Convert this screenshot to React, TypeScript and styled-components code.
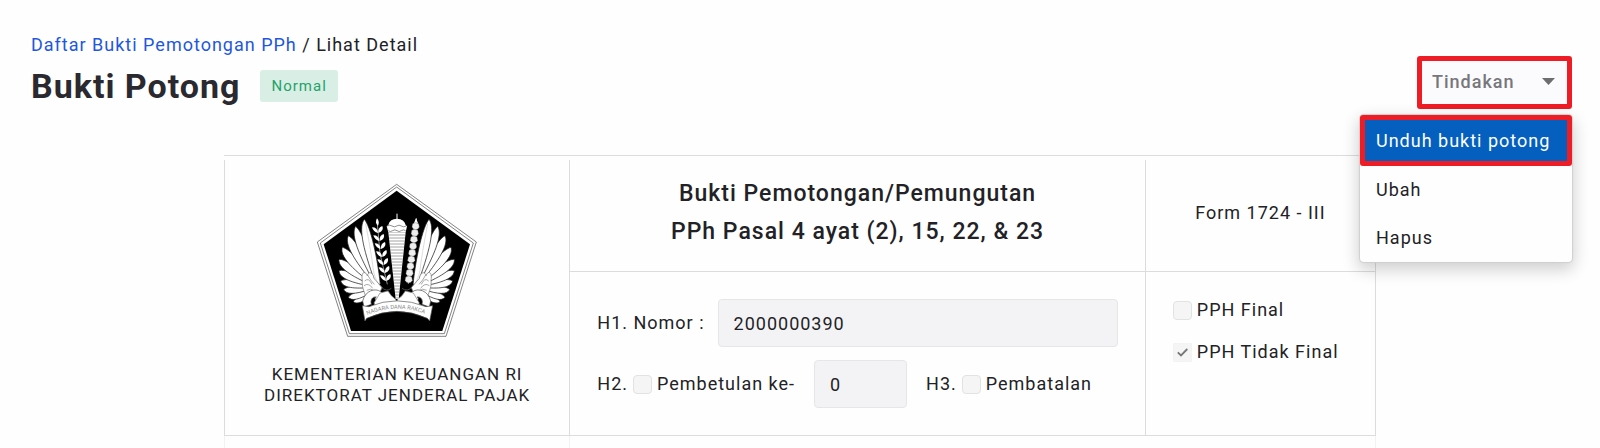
import React from "react";
import styled, { createGlobalStyle, css } from "styled-components";

const GlobalStyle = createGlobalStyle`
  * { box-sizing: border-box; }
  body {
    margin: 0;
    background: #fefefe;
    color: #222226;
    font-family: Roboto, "Liberation Sans", sans-serif;
    font-size: 18px;
    line-height: 24px;
    letter-spacing: 1px;
  }
  button, input { font: inherit; letter-spacing: inherit; color: inherit; }
`;

const line = "#dcdcdc";
const accent = "#ee1c25";

const Page = styled.main`
  padding-top: 32px;
`;

const Header = styled.header`
  padding: 0 28px 0 31px;
`;

const Breadcrumb = styled.nav`
  padding-top: 1px;
  line-height: 23px;
  a { color: #1f57e0; text-decoration: none; }
`;

const TitleRow = styled.div`
  display: flex;
  align-items: center;
  justify-content: space-between;
`;

const TitleGroup = styled.div`
  display: flex;
  align-items: center;
  gap: 20px;
  padding-top: 6px;
`;

const Title = styled.h1`
  margin: 0;
  font-size: 34px;
  line-height: 40px;
  font-weight: 700;
  color: #2b2930;
`;

const Badge = styled.span`
  padding: 4px 11px;
  border-radius: 3px;
  background: #d9efe5;
  color: #1fa36c;
  font-size: 15px;
`;

const Dropdown = styled.div`
  position: relative;
`;

const DropdownButton = styled.button`
  display: flex;
  align-items: center;
  justify-content: space-between;
  width: 155px;
  height: 53px;
  padding: 0 12px 2px 10px;
  border: 5px solid ${accent};
  border-radius: 3px;
  background: #fbfbfd;
  color: #77777b;
  font-weight: 500;
`;

const Menu = styled.div`
  position: absolute;
  top: 100%;
  right: 0;
  z-index: 1;
  width: 212px;
  margin-top: 6px;
  border-radius: 4px;
  background: #fefefe;
  box-shadow: 0 0 1px 1px #cfcfcf, 0 6px 16px 2px rgba(0, 0, 0, 0.18);
`;

const MenuItem = styled.button<{ $active?: boolean }>`
  display: block;
  width: 100%;
  height: 48px;
  padding: 0 16px;
  border: 0;
  background: none;
  text-align: left;
  ${({ $active }) =>
    $active &&
    css`
      height: 51px;
      padding: 0 11px;
      border: 5px solid ${accent};
      border-radius: 3px;
      background: #045fbf;
      color: #fff;
    `}
`;

const Sheet = styled.section`
  width: 72%;
  margin: 46px auto 0;
  padding-top: 4px;
  border-top: 1px solid ${line};
`;

const Grid = styled.div`
  display: grid;
  grid-template-columns: 3fr 5fr 2fr;
  border-right: 1px solid ${line};
`;

const Cell = styled.div`
  border-left: 1px solid ${line};
  border-bottom: 1px solid ${line};
`;

const Agency = styled(Cell)`
  grid-row: span 2;
  display: flex;
  flex-direction: column;
  align-items: center;
  gap: 26px;
  padding-top: 23px;
  font-size: 17px;
  line-height: 21px;
  text-align: center;
  p { margin: 0; }
`;

const CenterCell = styled(Cell)`
  display: grid;
  place-items: center;
  padding: 15px 0 20px;
  text-align: center;
`;

const FormTitle = styled.h2`
  margin: 0;
  font-size: 23px;
  line-height: 38px;
  font-weight: 500;
`;

const Fields = styled(Cell)`
  display: flex;
  flex-direction: column;
  gap: 13px;
  padding: 27px 27px 27px;
`;

const FieldRow = styled.div`
  display: flex;
  align-items: center;
`;

const TextInput = styled.input<{ $short?: boolean }>`
  height: 48px;
  padding: 0 15px;
  border: 1px solid #e6e6e9;
  border-radius: 4px;
  background: #f3f3f5;
  ${({ $short }) =>
    $short
      ? css`width: 93px; margin: 0 19px;`
      : css`flex: 1; min-width: 0; margin-left: 13px;`}
`;

const Options = styled(Cell)`
  display: flex;
  flex-direction: column;
  gap: 18px;
  padding: 26px 0 0 27px;
`;

const CheckLabel = styled.label`
  display: flex;
  align-items: center;
  gap: 5px;
`;

const CheckStack = styled.span`
  display: grid;
  place-items: center;
  > * { grid-area: 1 / 1; }
  svg { pointer-events: none; }
`;

const CheckInput = styled.input`
  appearance: none;
  width: 19px;
  height: 19px;
  margin: 0;
  border: 1px solid #e2e2e2;
  border-radius: 4px;
  background: #f5f5f5;
  &:checked { border-color: #f3f3f3; border-radius: 1px; }
`;

const FieldPrefix = styled.span`
  margin-right: 5px;
`;

const Tail = styled.div`
  display: grid;
  grid-template-columns: 3fr 7fr;
  height: 12px;
  border-right: 1px solid #f2f2f2;
  > * { border-left: 1px solid #f2f2f2; }
`;

function Check({ label, checked = false }: { label: string; checked?: boolean }) {
  return (
    <CheckLabel>
      <CheckStack>
        <CheckInput type="checkbox" defaultChecked={checked} />
        {checked && (
          <svg width="11" height="9" viewBox="0 0 11 9" fill="none" stroke="#77777a" strokeWidth="1.8">
            <path d="M.8 4.4 4 7.5 10.3 1" />
          </svg>
        )}
      </CheckStack>
      {label}
    </CheckLabel>
  );
}

const feathers: [number, number, number, number, number][] = [
  // tip x, tip y, root x, root y, half width
  [160, 394, 222, 366, 12],
  [145, 381, 218, 358, 14],
  [131, 358, 216, 350, 15],
  [122, 332, 214, 346, 16],
  [117, 301, 214, 342, 17],
  [117, 267, 216, 338, 18],
  [127, 231, 218, 334, 19],
  [145, 196, 222, 332, 19],
  [167, 168, 228, 334, 19],
  [193, 147, 236, 346, 20],
];

function feather([tx, ty, rx, ry, w]: [number, number, number, number, number]) {
  const dx = rx - tx;
  const dy = ry - ty;
  const len = Math.hypot(dx, dy);
  const nx = (-dy / len) * w;
  const ny = (dx / len) * w;
  const at = (t: number, s: number) => `${tx + dx * t + nx * s} ${ty + dy * t + ny * s}`;
  return `M${tx} ${ty}C${at(0.08, 1)} ${at(0.35, 1.25)} ${at(0.95, 0.4)}L${rx} ${ry}L${at(0.97, -0.3)}C${at(0.6, -0.7)} ${at(0.12, -0.7)} ${tx} ${ty}Z`;
}

function Wing() {
  return (
    <g fill="#fff" stroke="#1c1c1c" strokeWidth="2.2">
      {feathers.map((f) => (
        <path key={f[1]} d={feather(f)} />
      ))}
      <path d="M197 160Q216 260 220 300Q226 334 246 352" fill="none" stroke="#ccc" strokeWidth="2" />
      <path d="M187 330C182 304 196 300 202 316C206 300 220 308 222 324L246 352L238 370L200 384C190 360 185 346 187 330Z" stroke="#777" />
      <path d="M194 332q12-12 22 10M192 346q14-10 26 8M203 314q8 16 20 28M200 360q12-8 24 2" fill="none" stroke="#888" />
      <path d="M188 392C196 360 226 352 242 364C256 374 248 392 234 392C226 392 222 384 229 380C218 378 210 388 214 402L192 410Z" stroke="#555" />
      <path d="M240 368l24-6 10 14 14 12v12l-60 8-6-10z" stroke="#888" />
      <path d="M244 350q14 16 30 4" fill="none" stroke="#666" />
    </g>
  );
}

function Emblem() {
  const leaves = [0, 1, 2, 3, 4, 5, 6];
  const stripes = Array.from({ length: 22 }, (_, i) => i);
  return (
    <svg width="162" height="155" viewBox="48 38 486 465" role="img" aria-label="Kementerian Keuangan">
      <g fill="#fff" stroke="#444" strokeWidth="2">
        <path d="M290 42 529 215 438 498H143L52 215Z" />
        <path d="M290 50 520 218 433 490H148L61 218Z" />
      </g>
      <path d="M290 61 510 222 427 482H153L71 222Z" fill="#000" />
      <Wing />
      <g transform="translate(580 0) scale(-1 1)">
        <Wing />
      </g>
      <path d="M232 160 240 250 262 342" fill="none" stroke="#ddd" strokeWidth="2" />
      <path d="M231 144q9 10 3 22q-11-8-3-22z" fill="#fff" />
      {leaves.map((i) => (
        <g key={i} transform={`translate(${234 + i * 4} ${184 + i * 24})`} fill="#fff">
          <path d="M0 4Q-14 1-18-13Q-1-13 0 4Z" />
          <path d="M1 4Q-1-12 13-17Q19-3 1 4Z" />
        </g>
      ))}
      <path d="M349 144 325 340" stroke="#ddd" strokeWidth="3" />
      <path d="M348 144l6 14h-12z" fill="#fff" />
      {Array.from({ length: 9 }, (_, i) => (
        <path
          key={i}
          transform={`translate(${347 - i * 2.6} ${168 + i * 20})`}
          d="M-9-8Q0-14 9-8L11 2Q8 10 0 10Q-8 10-11 2Z"
          fill="#eee"
          stroke="#555"
        />
      ))}
      <path d="M291 130v18" stroke="#fff" strokeWidth="3" />
      <path d="M265 164Q268 146 291 145Q313 146 317 164L321 168L317 186H265L260 168Z" fill="#fff" />
      <path d="M262 167q7-5 14 0t14 0t14 0t14 0M265 181q6 5 13 0t13 0t13 0t13 0" fill="none" stroke="#555" strokeWidth="2" />
      <path d="M265 186H317L296 386H287Z" fill="#fff" />
      {stripes.map((i) => {
        const y = 194 + i * 9;
        const half = 26 - ((y - 186) / 200) * 22;
        return <path key={i} d={`M${291 - half} ${y}H${291 + half}`} stroke="#777" strokeWidth="2" />;
      })}
      <path d="M187 406L207 409Q290 374 378 409L398 406L389 452L382 444Q290 402 200 444L195 452Z" fill="#fff" stroke="#555" strokeWidth="2" />
      <path id="motto" d="M202 434Q290 396 384 434" fill="none" />
      <text fontSize="17" fill="#888" letterSpacing="0">
        <textPath href="#motto">NAGARA DANA RAKCA</textPath>
      </text>
    </svg>
  );
}

export default function App() {
  return (
    <Page>
      <GlobalStyle />
      <Header>
        <Breadcrumb>
          <a href="#daftar">Daftar Bukti Pemotongan PPh</a> / Lihat Detail
        </Breadcrumb>
        <TitleRow>
          <TitleGroup>
            <Title>Bukti Potong</Title>
            <Badge>Normal</Badge>
          </TitleGroup>
          <Dropdown>
            <DropdownButton type="button" aria-haspopup="menu" aria-expanded="true">
              Tindakan
              <svg width="13" height="7" viewBox="0 0 13 7" fill="#6d6d70">
                <path d="M0 0h13L6.500 7z" />
              </svg>
            </DropdownButton>
            <Menu role="menu">
              <MenuItem type="button" role="menuitem" $active>Unduh bukti potong</MenuItem>
              <MenuItem type="button" role="menuitem">Ubah</MenuItem>
              <MenuItem type="button" role="menuitem">Hapus</MenuItem>
            </Menu>
          </Dropdown>
        </TitleRow>
      </Header>
      <Sheet>
        <Grid>
          <Agency>
            <Emblem />
            <p>
              KEMENTERIAN KEUANGAN RI
              <br />
              DIREKTORAT JENDERAL PAJAK
            </p>
          </Agency>
          <CenterCell>
            <FormTitle>
              Bukti Pemotongan/Pemungutan
              <br />
              PPh Pasal 4 ayat (2), 15, 22, &amp; 23
            </FormTitle>
          </CenterCell>
          <CenterCell>Form 1724 - III</CenterCell>
          <Fields>
            <FieldRow>
              <label htmlFor="nomor">H1. Nomor :</label>
              <TextInput id="nomor" defaultValue="2000000390" />
            </FieldRow>
            <FieldRow>
              <FieldPrefix>H2.</FieldPrefix>
              <Check label="Pembetulan ke-" />
              <TextInput $short aria-label="Pembetulan ke-" defaultValue="0" />
              <FieldPrefix>H3.</FieldPrefix>
              <Check label="Pembatalan" />
            </FieldRow>
          </Fields>
          <Options>
            <Check label="PPH Final" />
            <Check label="PPH Tidak Final" checked />
          </Options>
        </Grid>
        <Tail>
          <span />
          <span />
        </Tail>
      </Sheet>
    </Page>
  );
}
